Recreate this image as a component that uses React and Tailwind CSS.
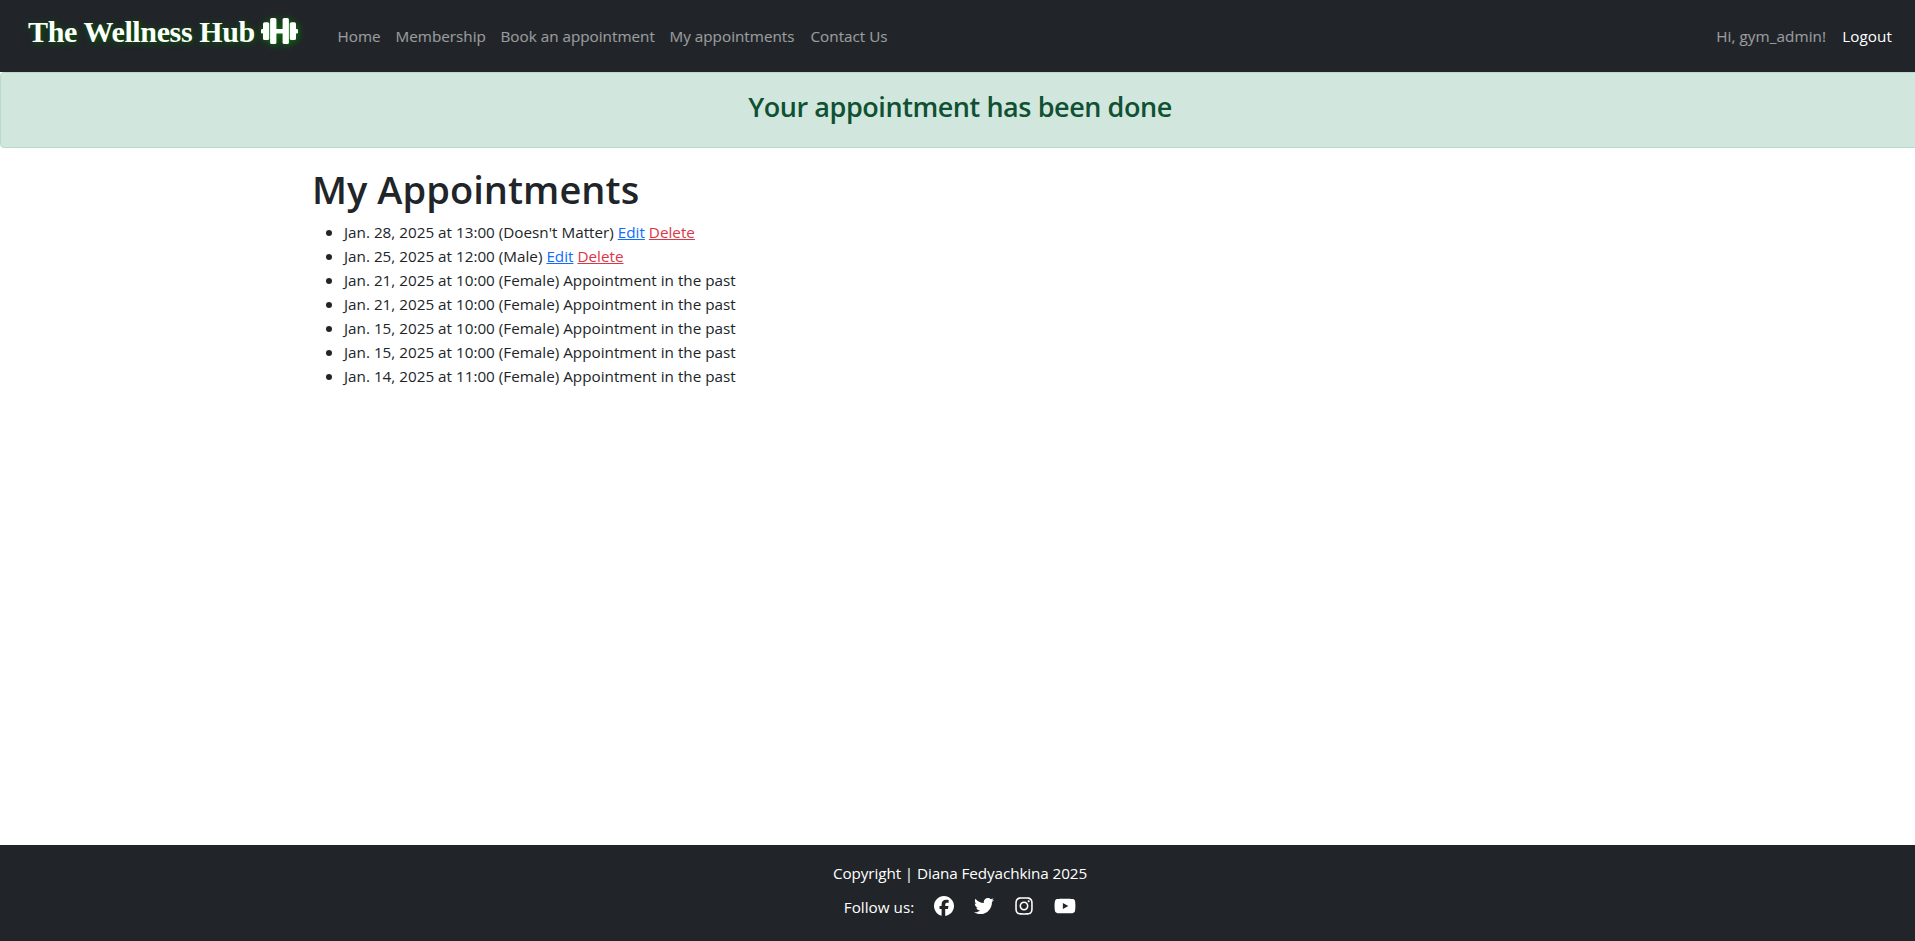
import { FaFacebook, FaTwitter, FaInstagram, FaYoutube } from "react-icons/fa6";

const links = [
  { label: "Home", style: "w-[58px]" },
  { label: "Membership", style: "w-[105px]" },
  { label: "Book an appointment", style: "w-[169px]" },
  { label: "My appointments", style: "w-[141px]" },
  { label: "Contact Us", style: "w-[93px]" },
];

const appointments = [
  { when: "Jan. 28, 2025 at 13:00 (Doesn't Matter)", past: false },
  { when: "Jan. 25, 2025 at 12:00 (Male)", past: false },
  { when: "Jan. 21, 2025 at 10:00 (Female)", past: true },
  { when: "Jan. 21, 2025 at 10:00 (Female)", past: true },
  { when: "Jan. 15, 2025 at 10:00 (Female)", past: true },
  { when: "Jan. 15, 2025 at 10:00 (Female)", past: true },
  { when: "Jan. 14, 2025 at 11:00 (Female)", past: true },
];

function Dumbbell() {
  return (
    <svg viewBox="0 0 37 26" fill="currentColor" className="-mt-0.5 h-[26px] w-[37px] shrink-0 overflow-visible drop-shadow-[1px_1px_3px_#008000]">
      <rect x="0" y="11" width="4" height="4.5" rx="1.2" />
      <rect x="2" y="4.2" width="6.2" height="17.8" rx="1.6" />
      <rect x="9.1" y="0" width="6.3" height="26" rx="1.6" />
      <rect x="14" y="11" width="9" height="4.5" />
      <rect x="21.6" y="0" width="6.3" height="26" rx="1.6" />
      <rect x="28.8" y="4.2" width="6.2" height="17.8" rx="1.6" />
      <rect x="33" y="11" width="4" height="4.5" rx="1.2" />
    </svg>
  );
}

export default function App() {
  return (
    <div className="w-full overflow-hidden">
      <div className="flex min-h-screen w-[1920px] flex-col bg-white font-['Open_Sans',sans-serif] text-[15.25px] leading-6 text-[#212529]">
        <nav className="flex h-[72px] shrink-0 items-center bg-[#212529] pl-7 pr-5">
          <a className="mr-[31.5px] flex w-[270px] items-center gap-1.5 whitespace-nowrap pb-2 font-['Liberation_Serif',serif] text-[30px] font-bold leading-10 tracking-[-0.37px] text-white [text-shadow:1px_1px_6px_#006000]">
            The Wellness Hub
            <Dumbbell />
          </a>
          <ul className="flex">
            {links.map((l) => (
              <li key={l.label} className={"whitespace-nowrap px-2 text-white/55 " + l.style}>{l.label}</li>
            ))}
          </ul>
          <div className="ml-auto flex">
            <span className="px-2 tracking-[0.08px] text-white/55">Hi, gym_admin!</span>
            <a className="px-2 tracking-[0.08px] text-white">Logout</a>
          </div>
        </nav>

        <div className="flex h-[76px] shrink-0 justify-center rounded border border-[#badbcc] bg-[#d1e7dd] pt-[17px] text-[#0f5132]">
          <h2 className="text-[27px] font-semibold leading-[34px] tracking-[-0.43px]">Your appointment has been done</h2>
        </div>

        <main className="ml-[312px] flex-1 pt-[17px]">
          <h1 className="mb-[7px] text-[38px] font-semibold leading-[48px] tracking-[0.05px]">My Appointments</h1>
          <ul className="pl-8">
            {appointments.map((a, i) => (
              <li
                key={i}
                className="h-6 before:-ml-[18px] before:mr-3 before:inline-block before:size-1.5 before:rounded-full before:bg-[#212529] before:align-[2px] before:content-['']"
              >
                {a.when}{" "}
                {a.past ? (
                  "Appointment in the past"
                ) : (
                  <>
                    <a className="text-[#0d6efd] underline">Edit</a>{" "}
                    <a className="text-[#dc3545] underline">Delete</a>
                  </>
                )}
              </li>
            ))}
          </ul>
        </main>

        <footer className="flex h-24 shrink-0 flex-col items-center bg-[#212529] pt-4 text-white">
          <p className="tracking-[-0.1px]">Copyright | Diana Fedyachkina 2025</p>
          <div className="mt-2.5 flex items-start">
            <span className="mr-5">Follow us:</span>
            <div className="flex items-center gap-5">
              <FaFacebook size={20} />
              <FaTwitter size={20} />
              <FaInstagram size={20} />
              <FaYoutube size={22} />
            </div>
          </div>
        </footer>
      </div>
    </div>
  );
}
